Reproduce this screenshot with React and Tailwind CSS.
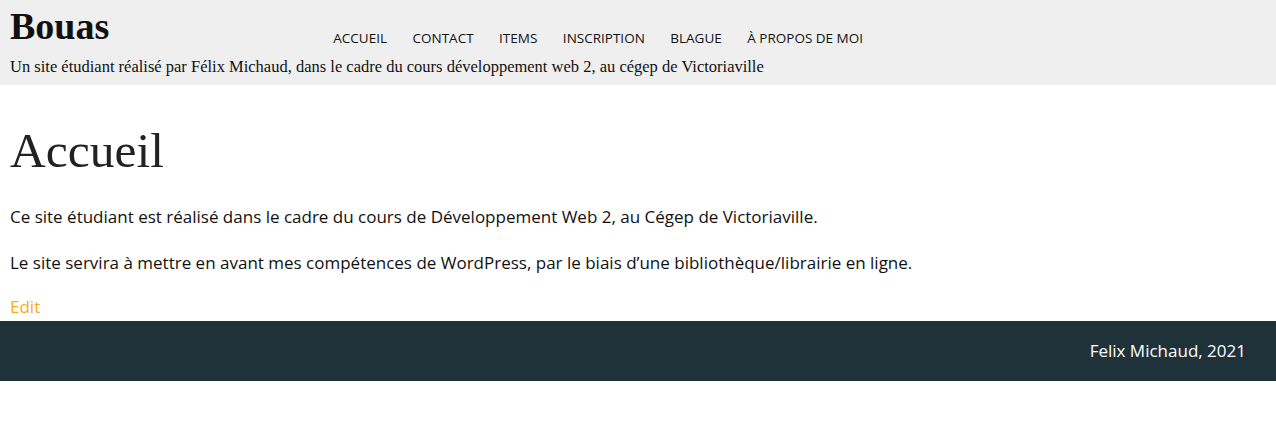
import React from 'react';

export default function App() {
  const links = ['Accueil', 'Contact', 'Items', 'Inscription', 'Blague', 'À propos de moi'];

  return (
    <div className="min-h-[427px] bg-white">
      {/* Header */}
      <header className="bg-[#efefef] px-[10px] pt-[4px] pb-[7px] text-[#111]">
        <div className="flex items-end">
          <h1 className="font-['Liberation_Serif',serif] text-[38px] font-bold leading-[44px]">Bouas</h1>
          <nav className="ml-[224px] flex gap-[25.5px] font-['Open_Sans',sans-serif] text-[13.5px] uppercase text-[#111]">
            {links.map((l) => (
              <a key={l} href="#">{l}</a>
            ))}
          </nav>
        </div>
        <p className="font-['Liberation_Serif',serif] text-[16.5px] leading-[22px] mt-[8px]">
          Un site étudiant réalisé par Félix Michaud, dans le cadre du cours développement web 2, au cégep de Victoriaville
        </p>
      </header>

      {/* Content */}
      <main className="px-[10px] pt-[37px] pb-[2px] font-['Open_Sans',sans-serif] text-[17px] text-[#111]">
        <h2 className="font-['Liberation_Serif',serif] text-[49.5px] leading-[57px] text-[#222]">Accueil</h2>
        <p className="mt-[26px] leading-[24px]">
          Ce site étudiant est réalisé dans le cadre du cours de Développement Web 2, au Cégep de Victoriaville.
        </p>
        <p className="mt-[22px] leading-[24px]">
          Le site servira à mettre en avant mes compétences de WordPress, par le biais d’une bibliothèque/librairie en ligne.
        </p>
        <a href="#" className="mt-[20px] block leading-[24px] text-[#f8ac1c]">Edit</a>
      </main>

      {/* Footer */}
      <footer className="bg-[#203239] h-[60px] flex items-center justify-end pr-[30px] font-['Open_Sans',sans-serif] text-[17px] text-white">
        Felix Michaud, 2021
      </footer>
    </div>
  );
}
